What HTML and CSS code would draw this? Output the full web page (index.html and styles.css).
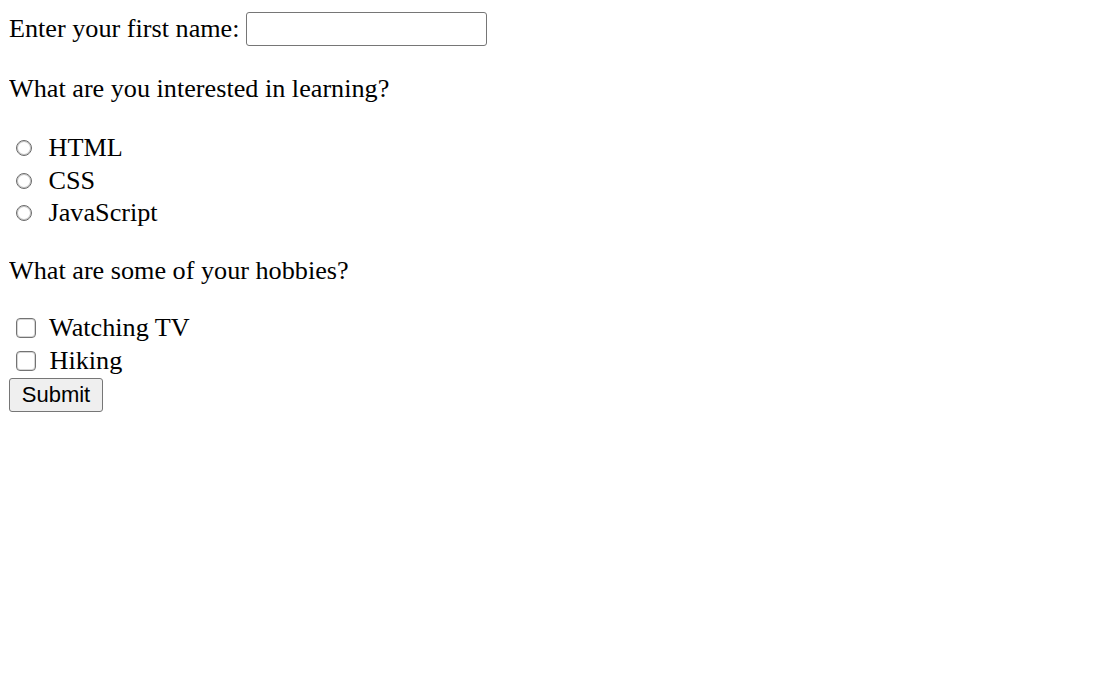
FILE: index.html
```html
<!DOCTYPE html>
<html>
<head>
<meta charset="utf-8">
<link rel="stylesheet" href="styles.css">
</head>
<body>
<form class="form">
  <label class="name-row">Enter your first name: <input class="text-input" type="text"></label>
  <p class="question question-first">What are you interested in learning?</p>
  <label class="choice radio-row"><input class="radio" type="radio" name="learn"> HTML</label>
  <label class="choice radio-row"><input class="radio" type="radio" name="learn"> CSS</label>
  <label class="choice radio-row"><input class="radio" type="radio" name="learn"> JavaScript</label>
  <p class="question">What are some of your hobbies?</p>
  <label class="choice check-row"><input class="check" type="checkbox"> Watching TV</label>
  <label class="choice check-row"><input class="check" type="checkbox"> Hiking</label>
  <button class="submit" type="button">Submit</button>
</form>
</body>
</html>
```
FILE: styles.css
```css
html, body {
  background: #fff;
}
body {
  margin: 8px 8px 8px 9px;
  font-family: "Liberation Serif", "Times New Roman", serif;
  font-size: 26.2px;
  color: #000;
}
.form {
  display: block;
}
.name-row {
  display: flex;
  align-items: center;
  height: 42px;
  white-space: pre;
}
.text-input {
  box-sizing: border-box;
  width: 241px;
  height: 34px;
  margin: 0;
  border: 1px solid #767676;
  border-radius: 3px;
  padding: 0 4px;
  font: inherit;
  background: #fff;
}
.question {
  margin: 26px 0;
  line-height: 30px;
}
.question-first {
  margin: 24px 0 28px;
}
.choice {
  display: flex;
  align-items: center;
  white-space: pre;
}
.radio-row {
  height: 32.5px;
}
.check-row {
  height: 33px;
}
.radio {
  appearance: none;
  flex: none;
  box-sizing: border-box;
  width: 16px;
  height: 16px;
  margin: 0 10px 0 7px;
  border: 1px solid #6a6a6a;
  border-radius: 50%;
  background: #fff;
  box-shadow: inset 0 0 0 1px rgba(120, 120, 120, 0.45);
}
.check {
  appearance: none;
  flex: none;
  box-sizing: border-box;
  width: 20px;
  height: 20px;
  margin: 0 7px 0 7px;
  border: 1px solid #737373;
  border-radius: 4px;
  background: #fff;
  box-shadow: inset 0 0 0 1px rgba(120, 120, 120, 0.3);
}
.submit {
  box-sizing: border-box;
  width: 94px;
  height: 34px;
  margin: 0;
  padding: 0;
  border: 1px solid #767676;
  border-radius: 3px;
  background: #efefef;
  font-family: "Liberation Sans", Arial, sans-serif;
  font-size: 22px;
  color: #000;
}
```
